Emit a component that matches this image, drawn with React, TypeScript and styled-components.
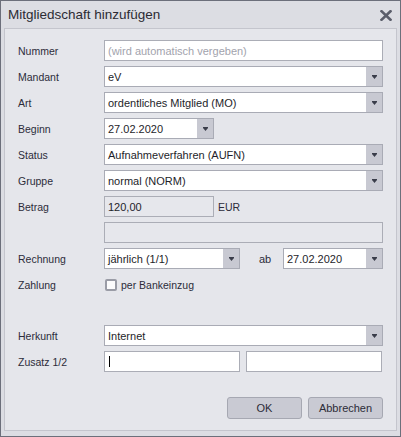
import React from "react";
import styled, { createGlobalStyle } from "styled-components";

const Global = createGlobalStyle`
  html, body { margin: 0; padding: 0; background: #dcdde3; }
  * { box-sizing: border-box; }
`;

const Window = styled.div`
  width: 401px;
  height: 437px;
  border: 1px solid #6c6f7b;
  background: #dcdde3;
  display: flex;
  flex-direction: column;
  font-family: "Liberation Sans", Arial, sans-serif;
  color: #2c2c38;
`;

const TitleBar = styled.div`
  height: 27px;
  flex: none;
  display: flex;
  align-items: center;
  justify-content: space-between;
  padding: 0 8px 1px 7px;
`;

const Title = styled.div`
  font-size: 13.5px;
  color: #2b2b33;
`;

const Close = styled.svg`
  display: block;
  margin-top: 3px;
`;

const Panel = styled.div`
  flex: 1;
  margin: 0 3px 5px 3px;
  border: 1px solid #c4c5cd;
  background: #e5e6eb;
  padding: 11px 13px 10px 13px;
  display: flex;
  flex-direction: column;
  gap: 5px;
`;

const Row = styled.div`
  display: grid;
  grid-template-columns: 86px 1fr;
  align-items: center;
  height: 21px;
`;

const Spacer = styled.div`
  height: 20px;
`;

const Label = styled.div`
  font-size: 10.5px;
  color: #2c2c3a;
  padding-top: 1px;
`;

const Field = styled.div<{ $w?: number; $readOnly?: boolean }>`
  width: ${(p) => (p.$w ? `${p.$w}px` : "100%")};
  height: 21px;
  border: 1px solid #abadb6;
  background: ${(p) => (p.$readOnly ? "#e6e7ec" : "#ffffff")};
  display: flex;
  align-items: center;
  padding-left: 3px;
  font-size: 11px;
  color: #1e1e2a;
  flex: none;
`;

const Placeholder = styled.span`
  color: #a2a3ad;
`;

const Caret = styled.span`
  display: block;
  width: 1px;
  height: 11px;
  background: #000;
  margin-left: 1px;
`;

const ComboBox = styled.div<{ $w?: number }>`
  width: ${(p) => (p.$w ? `${p.$w}px` : "100%")};
  height: 21px;
  border: 1px solid #a9abb5;
  background: #ffffff;
  display: flex;
  align-items: stretch;
  font-size: 11px;
  color: #1e1e2a;
  flex: none;
`;

const ComboText = styled.div`
  flex: 1;
  display: flex;
  align-items: center;
  padding-left: 3px;
  white-space: nowrap;
  overflow: hidden;
`;

const ComboButton = styled.div`
  width: 16px;
  background: #c8c9d2;
  display: flex;
  align-items: center;
  justify-content: center;
`;

const Inline = styled.div<{ $gap?: number }>`
  display: flex;
  align-items: center;
  gap: ${(p) => p.$gap ?? 0}px;
`;

const Unit = styled.span`
  font-size: 10.5px;
  margin-left: 4px;
  color: #2c2c3a;
`;

const AbLabel = styled.span`
  font-size: 11px;
  margin-left: 19px;
  color: #2c2c3a;
`;

const Push = styled.div`
  margin-left: auto;
`;

const Check = styled.label`
  display: flex;
  align-items: center;
  gap: 4px;
  font-size: 10.5px;
  color: #2c2c3a;
  padding-left: 1px;
`;

const Box = styled.span`
  width: 12px;
  height: 12px;
  border: 2px solid #9a9ca6;
  border-radius: 2px;
  background: #fbfbfc;
  display: block;
`;

const Buttons = styled.div`
  display: flex;
  justify-content: flex-end;
  gap: 6px;
  margin-top: 20px;
`;

const Button = styled.button`
  width: 75px;
  height: 22px;
  border: 1px solid #a6a8b2;
  border-radius: 3px;
  background: #c9cad3;
  font-family: "Liberation Sans", Arial, sans-serif;
  font-size: 11px;
  color: #2c2c38;
  padding: 0;
`;

const Arrow = () => (
  <svg width="5" height="4" viewBox="0 0 5 4">
    <polygon points="0,0 5,0 5,1 2.5,4 0,1" fill="#3a3d4a" />
  </svg>
);

const Combo = ({ value, w }: { value: string; w?: number }) => (
  <ComboBox $w={w}>
    <ComboText>{value}</ComboText>
    <ComboButton>
      <Arrow />
    </ComboButton>
  </ComboBox>
);

export default function App() {
  return (
    <>
      <Global />
      <Window>
        <TitleBar>
          <Title>Mitgliedschaft hinzufügen</Title>
          <Close width="12" height="11" viewBox="0 0 12 11">
            <path d="M1.5 1.2 L10.5 9.8 M10.5 1.2 L1.5 9.8" stroke="#5b5e6b" strokeWidth="2.6" strokeLinecap="square" />
          </Close>
        </TitleBar>
        <Panel>
          <Row>
            <Label>Nummer</Label>
            <Field>
              <Placeholder>(wird automatisch vergeben)</Placeholder>
            </Field>
          </Row>
          <Row>
            <Label>Mandant</Label>
            <Combo value="eV" />
          </Row>
          <Row>
            <Label>Art</Label>
            <Combo value="ordentliches Mitglied (MO)" />
          </Row>
          <Row>
            <Label>Beginn</Label>
            <Combo value="27.02.2020" w={110} />
          </Row>
          <Row>
            <Label>Status</Label>
            <Combo value="Aufnahmeverfahren (AUFN)" />
          </Row>
          <Row>
            <Label>Gruppe</Label>
            <Combo value="normal (NORM)" />
          </Row>
          <Row>
            <Label>Betrag</Label>
            <Inline>
              <Field $w={110} $readOnly>120,00</Field>
              <Unit>EUR</Unit>
            </Inline>
          </Row>
          <Row>
            <Label />
            <Field $readOnly />
          </Row>
          <Row>
            <Label>Rechnung</Label>
            <Inline>
              <Combo value="jährlich (1/1)" w={136} />
              <AbLabel>ab</AbLabel>
              <Push>
                <Combo value="27.02.2020" w={100} />
              </Push>
            </Inline>
          </Row>
          <Row>
            <Label>Zahlung</Label>
            <Check>
              <Box />
              per Bankeinzug
            </Check>
          </Row>
          <Spacer />
          <Row>
            <Label>Herkunft</Label>
            <Combo value="Internet" />
          </Row>
          <Row>
            <Label>Zusatz 1/2</Label>
            <Inline $gap={6}>
              <Field $w={136}>
                <Caret />
              </Field>
              <Field $w={136} />
            </Inline>
          </Row>
          <Buttons>
            <Button>OK</Button>
            <Button>Abbrechen</Button>
          </Buttons>
        </Panel>
      </Window>
    </>
  );
}
